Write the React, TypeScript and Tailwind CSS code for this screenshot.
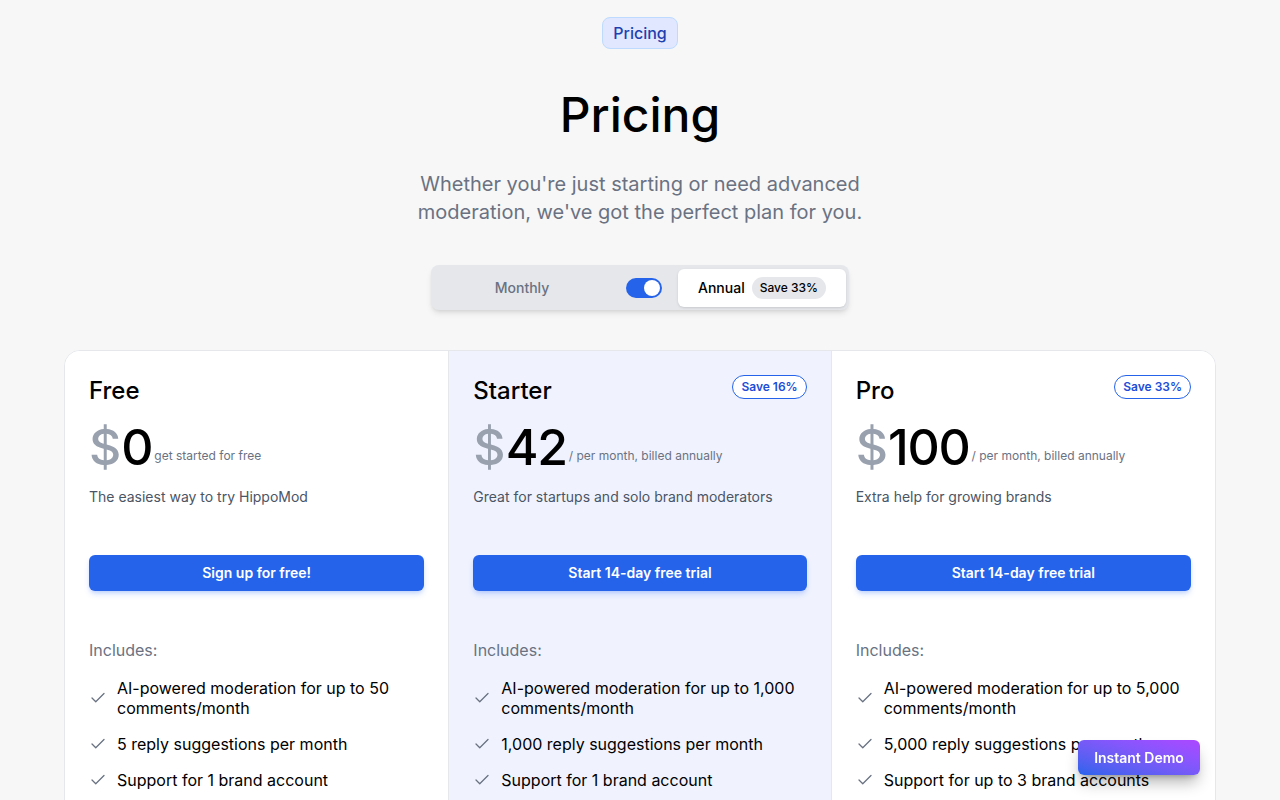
import { Check } from "lucide-react"

type Plan = {
    name: string
    price: string
    suffix: string
    desc: string
    cta: string
    save?: string
    highlight?: boolean
    features: string[]
}

const plans: Plan[] = [
    {
        name: "Free",
        price: "0",
        suffix: "get started for free",
        desc: "The easiest way to try HippoMod",
        cta: "Sign up for free!",
        features: [
            "AI-powered moderation for up to 50 comments/month",
            "5 reply suggestions per month",
            "Support for 1 brand account",
        ],
    },
    {
        name: "Starter",
        price: "42",
        suffix: "/ per month, billed annually",
        desc: "Great for startups and solo brand moderators",
        cta: "Start 14-day free trial",
        save: "Save 16%",
        highlight: true,
        features: [
            "AI-powered moderation for up to 1,000 comments/month",
            "1,000 reply suggestions per month",
            "Support for 1 brand account",
        ],
    },
    {
        name: "Pro",
        price: "100",
        suffix: "/ per month, billed annually",
        desc: "Extra help for growing brands",
        cta: "Start 14-day free trial",
        save: "Save 33%",
        features: [
            "AI-powered moderation for up to 5,000 comments/month",
            "5,000 reply suggestions per month",
            "Support for up to 3 brand accounts",
        ],
    },
]

function PlanColumn({ plan, middle }: { plan: Plan; middle: boolean }) {
    return (
        <div className={`px-6 pt-6 pb-10 ${plan.highlight ? "bg-[#f0f3fe]" : "bg-white"} ${middle ? "border-x border-gray-200" : ""}`}>
            <div className="flex items-start justify-between">
                <h3 className="text-2xl font-medium leading-8 text-black">{plan.name}</h3>
                {plan.save && (
                    <span className="rounded-full border border-[#2563eb] bg-white px-2 py-[3px] text-xs font-semibold text-[#1d4ed8]">
                        {plan.save}
                    </span>
                )}
            </div>
            <div className="mt-3 flex items-end">
                <span className="text-[50px] font-medium leading-[56px] text-gray-400">$</span>
                <span className="text-[50px] font-medium leading-[56px] tracking-tight text-black">{plan.price}</span>
                <span className="ml-0.5 pb-[11px] text-xs leading-4 text-gray-500">{plan.suffix}</span>
            </div>
            <p className="mt-3 h-[50px] text-sm text-gray-600">{plan.desc}</p>
            <button className="mt-[18px] h-9 w-full rounded-md bg-[#2563eb] text-sm font-semibold text-white shadow-md shadow-blue-600/20">
                {plan.cta}
            </button>
            <p className="mt-[47px] text-base text-gray-500">Includes:</p>
            <ul className="mt-4 flex flex-col gap-4">
                {plan.features.map((f) => (
                    <li key={f} className="flex items-center gap-[10px] text-base leading-5 text-black">
                        <Check className="h-[18px] w-[18px] shrink-0 text-gray-500" strokeWidth={1.75} />
                        <span>{f}</span>
                    </li>
                ))}
            </ul>
        </div>
    )
}

export default function App() {
    return (
        <div className="min-h-screen bg-[#f7f7f7] pb-20 font-['Inter',sans-serif]">
            <div className="flex flex-col items-center pt-[17px]">
                <span className="rounded-lg border border-blue-200 bg-[#e0e7ff] px-[10px] py-[3px] text-base font-medium text-[#1e40af]">
                    Pricing
                </span>
                <h1 className="mt-[38px] text-5xl font-medium leading-[56px] text-black">Pricing</h1>
                <p className="mt-[27px] max-w-md text-center text-xl leading-7 text-gray-500">
                    Whether you're just starting or need advanced moderation, we've got the perfect plan for you.
                </p>
                <div className="mt-[39px] flex h-[45px] w-[418px] items-center rounded-lg bg-gray-200 p-[3px] shadow-md">
                    <span className="w-[176px] text-center text-sm font-medium text-gray-500">Monthly</span>
                    <div className="ml-[16px] flex h-5 w-9 items-center justify-end rounded-full bg-[#2563eb] px-[2px]">
                        <div className="h-4 w-4 rounded-full bg-white" />
                    </div>
                    <div className="ml-[16px] flex h-[38px] w-[168px] items-center gap-[7px] rounded-md bg-white pl-5 shadow-sm">
                        <span className="text-sm font-medium text-black">Annual</span>
                        <span className="rounded-full bg-gray-200 px-2 py-[3px] text-xs font-medium text-black">Save 33%</span>
                    </div>
                </div>
            </div>
            <div className="mx-auto mt-10 grid max-w-6xl grid-cols-3 overflow-hidden rounded-2xl border border-gray-200 bg-white">
                {plans.map((p, i) => (
                    <PlanColumn key={p.name} plan={p} middle={i === 1} />
                ))}
            </div>
            <button className="fixed bottom-[25px] right-20 h-[35px] w-[122px] rounded-md bg-gradient-to-tr from-[#2563eb] to-purple-500 text-sm font-semibold text-white shadow-lg shadow-black/30">
                Instant Demo
            </button>
        </div>
    )
}
